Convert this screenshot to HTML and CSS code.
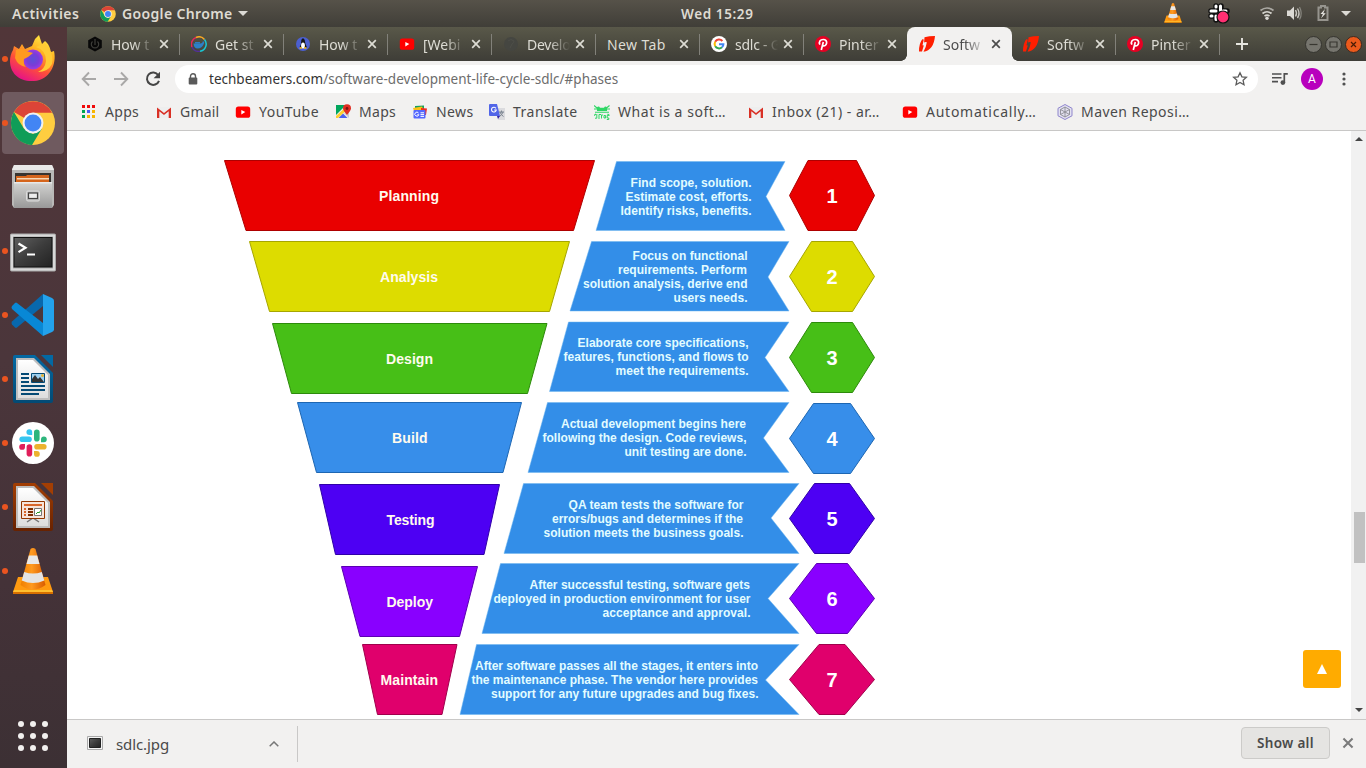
FILE: index.html
```html
<!DOCTYPE html>
<html lang="en">
<head>
<meta charset="utf-8">
<title>Software Development Life Cycle</title>
<link rel="stylesheet" href="styles.css">
</head>
<body>
<svg class="sprite" aria-hidden="true">
  <defs>
    <linearGradient id="cone" x1="0" x2="1" y1="0" y2="0"><stop offset="0" stop-color="#f08000"/><stop offset=".45" stop-color="#ff9a20"/><stop offset="1" stop-color="#d85a00"/></linearGradient>
    <linearGradient id="ff" x1=".8" x2=".3" y1="0" y2="1"><stop offset="0" stop-color="#fff04a"/><stop offset=".35" stop-color="#ffb020"/><stop offset=".65" stop-color="#ff5038"/><stop offset="1" stop-color="#e5108a"/></linearGradient>
    <radialGradient id="ffg"><stop offset="0" stop-color="#5b50d8"/><stop offset=".6" stop-color="#7b3cd8"/><stop offset="1" stop-color="#a03ce0"/></radialGradient>
    <linearGradient id="metal" x1="0" x2="0" y1="0" y2="1"><stop offset="0" stop-color="#d4d4d2"/><stop offset="1" stop-color="#999"/></linearGradient>
    <linearGradient id="dark" x1="0" x2="1" y1="0" y2="1"><stop offset="0" stop-color="#606060"/><stop offset=".5" stop-color="#3c3c3c"/><stop offset="1" stop-color="#222"/></linearGradient>
    <linearGradient id="paper" x1="0" x2="0" y1="0" y2="1"><stop offset="0" stop-color="#fff"/><stop offset="1" stop-color="#ddd"/></linearGradient>
    <linearGradient id="blue" x1="0" x2="0" y1="0" y2="1"><stop offset="0" stop-color="#0369a3"/><stop offset="1" stop-color="#034a74"/></linearGradient>
    <linearGradient id="brown" x1="0" x2="0" y1="0" y2="1"><stop offset="0" stop-color="#a33e03"/><stop offset="1" stop-color="#672201"/></linearGradient>
  </defs>
  <symbol id="chrome" viewBox="0 0 46 46">
    <circle cx="23" cy="23" r="22.5" fill="#ffcd40"/>
    <path d="M23 23L3.5 11.8A22.5 22.5 0 0 1 42.5 12.5H23z" fill="#db4437"/>
    <path d="M3.5 11.8L13.8 29l9.2 5.2 9-5.2-10 16.5A22.5 22.5 0 0 1 3.5 11.8z" fill="#0f9d58"/>
    <circle cx="23" cy="23" r="10.7" fill="#f1f1f1"/><circle cx="23" cy="23" r="8.6" fill="#4285f4"/>
  </symbol>
  <symbol id="vlc" viewBox="0 0 40 46">
    <path d="M5 29h30l5 15H0z" fill="#ff9a10"/><path d="M0 44h40v2H0z" fill="#d87000"/><path d="M1 42h38l1 2H0z" fill="#ffc030"/>
    <path d="M17.500 1q2.500-2 5 0l10 36q-12.500 9-25 0z" fill="url(#cone)"/>
    <path d="M15.800 7.500h8.400l2.300 8.500H13.500z" fill="#e8e8e8"/><path d="M11.200 24q8.800 3 17.600 0l2.500 8.500q-11.300 5-22.600 0z" fill="#e4e4e4"/>
  </symbol>
  <symbol id="yt" viewBox="0 0 16 16"><rect x=".8" y="2.500" width="14.400" height="11.300" rx="2.600" fill="#f00"/><path d="M6.300 5.900l4 2.200-4 2.300z" fill="#fff"/></symbol>
  <symbol id="gmail" viewBox="0 0 16 16"><path d="M2 3h12v11H2z" fill="#eee"/><path d="M1 14V3.500L8 9l7-5.500V14h-2.300V7.300L8 11 3.300 7.300V14z" fill="#d93025"/></symbol>
  <symbol id="pin" viewBox="0 0 16 16"><circle cx="8" cy="8" r="8" fill="#e60023"/><path d="M4.900 8.600C3.400 5.600 5.300 3.500 8.200 3.500c2.600 0 3.700 1.700 3.400 3.700-.3 2.200-2.500 3.600-3.900 2.100M8.300 6L6.300 14" fill="none" stroke="#fff" stroke-width="1.700"/></symbol>
  <symbol id="tb" viewBox="0 0 16 16"><path d="M5.500 1.200Q10 0 16 0q-.6 7-3.500 11Q9.500 15 4.500 15.700q2.600-4 3.300-9.400-1.300-.8-2.700.2z" fill="#ff1e00"/><path d="M3.300 3.200L4.800 3.600 3.500 9.300l1.300.3-1.800 6L0 15.500Q0 7 3.300 3.200z" fill="#ff1e00"/></symbol>
  <symbol id="x" viewBox="0 0 10 10"><path d="M1.200 1.200l7.600 7.600M8.800 1.200L1.200 8.800" stroke="currentColor" stroke-width="1.700"/></symbol>
  <symbol id="slackmarks" viewBox="0 0 28 28">
    <g stroke-width="5.600" stroke-linecap="round"><path d="M17.800 3.200v6.500" stroke="#2eb67d"/><path d="M18 17.800h6.800" stroke="#ecb22e"/><path d="M10.400 18v6.800" stroke="#e01e5a"/><path d="M3.200 10.300H10" stroke="#36c5f0"/></g>
    <path d="M13.200 6h-2.900a2.900 2.900 0 1 1 2.900-2.900z" fill="#36c5f0"/><path d="M22 13.200v-2.900a2.900 2.900 0 1 1 2.900 2.900z" fill="#2eb67d"/><path d="M15 22h2.900a2.900 2.900 0 1 1-2.900 2.900z" fill="#ecb22e"/><path d="M6 15v2.900A2.900 2.900 0 1 1 3.100 15z" fill="#e01e5a"/>
  </symbol>
</svg>

<header class="topbar">
  <span class="activities">Activities</span>
  <svg class="i16"><use href="#chrome"/></svg>
  <span class="appname">Google Chrome</span>
  <svg class="caret" viewBox="0 0 10 5"><path d="M0 0h10L5 5z" fill="#dcdad5"/></svg>
  <span class="clock">Wed 15:29</span>
  <svg class="tray" viewBox="1160 0 200 27">
    <use href="#vlc" x="1164" y="3" width="18" height="20"/>
    <g stroke-linecap="round"><path d="M1216 6v5M1211 11h5M1221 6v5M1211 16h3M1216 16v4M1221 11h6" stroke="#111" stroke-width="5.500"/><path d="M1216 6v1M1211 11h5M1220.500 6v4.500M1211 16h1M1216 16v3.500M1223 11h3" stroke="#fff" stroke-width="3"/></g>
    <circle cx="1223" cy="17" r="6" fill="#ff2f72" stroke="#111" stroke-width="1.200"/>
    <g fill="none" stroke="#d8d6d0" stroke-width="1.700"><path d="M1260.500 10.500q6.500-5 13 0" stroke="#aaa8a2"/><path d="M1262.500 13.500q4.500-3.500 9 0"/><path d="M1264.500 16.200q2.500-2 5 0"/></g><circle cx="1267" cy="18.300" r="1.700" fill="#dcdad5"/>
    <path d="M1287 10.500h3l4-4v13.500l-4-4h-3z" fill="#dcdad5"/><path d="M1295.500 10q2 3.200 0 6.500M1297.500 8.500q3 5 0 9.500" fill="none" stroke="#c8c6c0" stroke-width="1.400"/><path d="M1299.500 7q3.500 6.500 0 12.500" fill="none" stroke="#888780" stroke-width="1.200"/>
    <path d="M1318.500 7.500h2.500V6h4v1.500h2.500V20h-9z" fill="none" stroke="#96948e" stroke-width="2"/><path d="M1325 9l-4.500 5h2.400L1321 18.500l4.700-5.300h-2.400z" fill="#e8e6e2"/>
    <path d="M1341 11h10l-5 5z" fill="#dcdad5"/>
  </svg>
</header>

<div class="desktop">
<nav class="dock">
  <div class="launcher running"><svg class="big" viewBox="0 0 48 48"><path d="M23 11l3-7 4-4 3 9 3-3c4 3 5 7 6 11l3-1c3 13-4 29-20 30C10 47 1 38 1 26c0-4 1-8 3-11l1-4 5 3 3-5 3 5z" fill="url(#ff)"/><circle cx="24" cy="24.500" r="10" fill="url(#ffg)"/><path d="M7 15q5-3 10 1l7 2-5 4-4 2q-1 5 2 8-8-1-11-9z" fill="#ff9a20"/><path d="M27 12q10 3 10 14-1 8-8 11 10 0 14-8 2-9-4-16l-3-5z" fill="#ffcb35"/></svg></div>
  <div class="launcher running current"><svg class="big" viewBox="0 0 48 48"><use href="#chrome" x="1.500" y="1.500" width="45" height="45"/></svg></div>
  <div class="launcher"><svg class="big" viewBox="0 0 48 48"><path d="M5 2h38l2 4v36l-2 3H5l-2-3V6z" fill="#b9b9b7"/><path d="M5 2h38l2 5H3z" fill="#e9e9e8"/><path d="M6 10h36v11H6z" fill="#383430"/><path d="M7 13h10l1-1h22v9H7z" fill="#d5651c"/><path d="M8 15h32v1.500H8z" fill="#f7d8b6"/><path d="M5 19h38v26H5z" fill="url(#metal)"/><path d="M5 19h38v1.500H5z" fill="#e8e8e8"/><rect x="17.500" y="28" width="13" height="10" rx="1.500" fill="#bbb" stroke="#ddd"/><rect x="19.500" y="30" width="9" height="5.500" fill="#eee" stroke="#444" stroke-width="1.200"/></svg></div>
  <div class="launcher running"><svg class="big" viewBox="0 -1.500 48 48"><rect x="1.500" y="5.500" width="45" height="37" rx="1" fill="#d8d8d8" stroke="#aaa"/><rect x="4" y="8" width="40" height="32" fill="#aaa"/><rect x="5" y="9" width="38" height="29.500" fill="url(#dark)" stroke="#111"/><path d="M9.500 15l7 4.300-7 4.300M18 26h8" fill="none" stroke="#fff" stroke-width="2.200"/></svg></div>
  <div class="launcher running"><svg class="big" viewBox="0 0 48 48"><path d="M3 30.500L34 3v12L8 36.500q-1 .8-2 0L3 33.500q-1-1.500 0-3z" fill="#0868ad"/><path d="M3 15l3-3q1-1 2 0l26 20v13L3 18q-1-1.500 0-3z" fill="#0888d6"/><path d="M34 3l9 4q2 1 2 2.500v29q0 1.500-2 2.500l-9 4z" fill="#23a2ec"/></svg></div>
  <div class="launcher running"><svg class="big" viewBox="0 0 48 48"><path d="M4 2q0-2 2-2h20l18 18v28q0 2-2 2H6q-2 0-2-2z" fill="url(#blue)"/><path d="M7 3h18l16 16v26H7z" fill="#bdbdbd"/><path d="M9 5h15l15 15v23H9z" fill="url(#paper)"/><path d="M32 0h12v12z" fill="#0369a3"/><path d="M12 19h8M12 23h8M12 27h8M12 31h24M12 35h24M12 39h18" stroke="#044a75" stroke-width="2"/><path d="M22.500 18.500h13v9h-13z" fill="#9ed0ef" stroke="#044a75"/><path d="M23 27v-3l3-4 3 4 2-2 4 5z" fill="#333"/><circle cx="33.500" cy="20.500" r="1.500" fill="#e8b230"/></svg></div>
  <div class="launcher running"><svg class="big" viewBox="0 0 48 48"><circle cx="24" cy="24" r="21" fill="#fff"/><use href="#slackmarks" x="10" y="10" width="28" height="28"/></svg></div>
  <div class="launcher running"><svg class="big" viewBox="0 0 48 48"><path d="M4 2q0-2 2-2h20l18 18v28q0 2-2 2H6q-2 0-2-2z" fill="url(#brown)"/><path d="M7 3h18l16 16v26H7z" fill="#bdbdbd"/><path d="M9 5h15l15 15v23H9z" fill="url(#paper)"/><path d="M32 0h12v12z" fill="#a33e03"/><path d="M18 39l6-4 6 4" fill="none" stroke="#777" stroke-width="1.500"/><path d="M12.500 18.500h23v17h-23z" fill="#f7e4da" stroke="#933600"/><path d="M15 22h18" stroke="#d9662b" stroke-width="2"/><path d="M15 26h2M15 29h2M15 32h2" stroke="#d9662b" stroke-width="2"/><path d="M19 26h5M19 29h5M19 32h5" stroke="#812e00" stroke-width="2"/><path d="M25.500 25.500h7v7h-7z" fill="#fff" stroke="#777"/><path d="M27 31l2-2 1 1 2-3" fill="none" stroke="#2a9a2a"/></svg></div>
  <div class="launcher running"><svg class="big" viewBox="0 0 48 48"><use href="#vlc" x="4" y="1" width="40" height="46"/></svg></div>
  <svg class="appgrid" viewBox="0 0 30 30" fill="#f2f0ef"><circle cx="3" cy="3" r="3"/><circle cx="15" cy="3" r="3"/><circle cx="27" cy="3" r="3"/><circle cx="3" cy="15" r="3"/><circle cx="15" cy="15" r="3"/><circle cx="27" cy="15" r="3"/><circle cx="3" cy="27" r="3"/><circle cx="15" cy="27" r="3"/><circle cx="27" cy="27" r="3"/></svg>
</nav>

<main class="browser">
  <div class="tabs">
    <div class="tab"><svg class="i16" viewBox="0 0 16 16"><path d="M8 .5l6.800 3.800v7.500L8 15.500l-6.800-3.700V4.300z" fill="#080808"/><path d="M5.500 5.500a3.700 3.700 0 1 0 5 0M8 3v6" fill="none" stroke="#3e3e3a" stroke-width="1.200"/></svg><span class="title">How t</span><svg class="close"><use href="#x"/></svg></div>
    <div class="tab"><svg class="i16" viewBox="0 0 16 16" fill="none" stroke-width="1.500"><path d="M1 11A7.200 7.200 0 0 1 5 1.500" stroke="#e52858"/><path d="M5 1.500A7.200 7.200 0 0 1 13.500 3.500" stroke="#f7a823"/><path d="M13.500 3.500A7.200 7.200 0 0 1 9 15.200" stroke="#19c7d4"/><path d="M9 15.200A7.200 7.200 0 0 1 1 11" stroke="#53309a"/><path d="M2.500 7.500h7q2 0 2.500-2.500 2 1 1 2.500-2 5-6.500 5Q3 12.500 2.500 7.500z" fill="#2c80c8" stroke="none"/><path d="M4 6.800h5" stroke="#2c80c8"/></svg><span class="title">Get st</span><svg class="close"><use href="#x"/></svg></div>
    <div class="tab"><svg class="i16" viewBox="0 0 16 16"><circle cx="8" cy="8" r="7" fill="#4b5fd0"/><path d="M6.300 4q1.700-3.500 3.400 0l.8 4 1.500 3.500H4.500L6 8z" fill="#151515"/><ellipse cx="8" cy="9.500" rx="1.900" ry="3" fill="#fff"/><path d="M4.500 12h2.500M9 12h2.500" stroke="#f2b81e" stroke-width="1.600"/></svg><span class="title">How t</span><svg class="close"><use href="#x"/></svg></div>
    <div class="tab"><svg class="i16"><use href="#yt"/></svg><span class="title">[Webi</span><svg class="close"><use href="#x"/></svg></div>
    <div class="tab"><svg class="i16" viewBox="0 0 16 16"><circle cx="8" cy="8" r="7" fill="#454641"/><path d="M5 5q3-3 6 0 0 2-2 3l-2 4" fill="none" stroke="#4d4e48"/></svg><span class="title tight">Develo</span><svg class="close"><use href="#x"/></svg></div>
    <div class="tab"><span class="title full">New Tab</span><svg class="close"><use href="#x"/></svg></div>
    <div class="tab"><svg class="i16" viewBox="0 0 16 16"><circle cx="8" cy="8" r="8" fill="#fff"/><g fill="none" stroke-width="2"><path d="M4.200 5.800A4.500 4.500 0 0 1 11.400 5" stroke="#ea4335"/><path d="M4.200 10.200a4.500 4.500 0 0 1 0-4.400" stroke="#fbbc05"/><path d="M11 11.300a4.500 4.500 0 0 1-6.800-1.100" stroke="#34a853"/><path d="M8 8.200h4.400q0 2-1.400 3.100" stroke="#4285f4"/></g></svg><span class="title tight">sdlc - G</span><svg class="close"><use href="#x"/></svg></div>
    <div class="tab"><svg class="i16"><use href="#pin"/></svg><span class="title">Pinter</span><svg class="close"><use href="#x"/></svg></div>
    <div class="tab active"><svg class="i16"><use href="#tb"/></svg><span class="title">Softw</span><svg class="close"><use href="#x"/></svg></div>
    <div class="tab"><svg class="i16"><use href="#tb"/></svg><span class="title">Softw</span><svg class="close"><use href="#x"/></svg></div>
    <div class="tab"><svg class="i16"><use href="#pin"/></svg><span class="title">Pinter</span><svg class="close"><use href="#x"/></svg></div>
    <svg class="newtab" viewBox="0 0 12 12"><path d="M6 0v12M0 6h12" stroke="#e6e5df" stroke-width="1.900"/></svg>
    <div class="winbtns">
      <svg viewBox="0 0 17 17"><circle cx="8.500" cy="8.500" r="8" fill="#76756e" stroke="#35342f"/><path d="M4.500 8.500h8" stroke="#383731" stroke-width="1.200"/></svg>
      <svg viewBox="0 0 17 17"><circle cx="8.500" cy="8.500" r="8" fill="#76756e" stroke="#35342f"/><path d="M5 6h7v5H5z" fill="none" stroke="#383731" stroke-width="1.200"/></svg>
      <svg viewBox="0 0 17 17"><circle cx="8.500" cy="8.500" r="8" fill="#eb5a1c" stroke="#3a2a22"/><path d="M6 6l5 5M11 6l-5 5" stroke="#4a1c05" stroke-width="1.200"/></svg>
    </div>
  </div>

  <div class="toolbar">
    <svg class="nav" viewBox="0 0 16 16"><path d="M15 8H2M8 1.500L1.700 8 8 14.500" fill="none" stroke="#a9a8a7" stroke-width="1.900"/></svg>
    <svg class="nav" viewBox="0 0 16 16"><path d="M1 8h13M8 1.500L14.300 8 8 14.500" fill="none" stroke="#a9a8a7" stroke-width="1.900"/></svg>
    <svg class="nav" viewBox="0 0 16 16"><path d="M13.300 4.200A6.200 6.200 0 1 0 14 9.800" fill="none" stroke="#454545" stroke-width="2"/><path d="M15 .8v6.400H8.600z" fill="#454545"/></svg>
    <div class="omnibox">
      <svg class="lock" viewBox="0 0 10 12"><path d="M2.500 5V3.300a2.500 2.500 0 0 1 5 0V5" fill="none" stroke="#5a5a5a" stroke-width="1.400"/><rect x=".7" y="4.500" width="8.600" height="7" rx="1" fill="#5a5a5a"/></svg>
      <span class="url">techbeamers.com<span class="path">/software-development-life-cycle-sdlc/#phases</span></span>
      <svg class="star" viewBox="0 0 16 16"><path d="M8 1.700l1.900 4.100 4.500.5-3.300 3 .9 4.500L8 11.500l-4 2.300.9-4.500-3.300-3 4.500-.5z" fill="none" stroke="#5c5c5c" stroke-width="1.300"/></svg>
    </div>
    <svg class="queue" viewBox="0 0 16 14"><path d="M0 2h9.500M0 5.800h9.500M0 9.600h6" stroke="#505050" stroke-width="1.600"/><path d="M15.800 1.800h-3.500v8.500" fill="none" stroke="#505050" stroke-width="1.700"/><circle cx="10.900" cy="10.600" r="2.400" fill="#505050"/></svg>
    <span class="avatar">A</span>
    <svg class="menu" viewBox="0 0 4 14" fill="#505050"><circle cx="2" cy="2" r="1.600"/><circle cx="2" cy="7" r="1.600"/><circle cx="2" cy="12" r="1.600"/></svg>
  </div>

  <div class="bookmarks">
    <div class="bm apps"><svg class="i16" viewBox="0 0 16 16"><path d="M1 1h3v3H1zM6 1h3v3H6zM11 1h3v3h-3z" fill="#f00a0a"/><path d="M1 6h3v3H1zM1 11h3v3H1z" fill="#00a651"/><path d="M6 6h3v3H6z" fill="#4b5cf5"/><path d="M11 6h3v3h-3zM6 11h3v3H6zM11 11h3v3h-3z" fill="#f7b500"/></svg><span>Apps</span></div>
    <div class="bm gm"><svg class="i16"><use href="#gmail"/></svg><span>Gmail</span></div>
    <div class="bm you"><svg class="i16"><use href="#yt"/></svg><span>YouTube</span></div>
    <div class="bm maps"><svg class="i16" viewBox="0 0 16 16"><path d="M1 2h13v12H1z" fill="#eee"/><path d="M1 1h10L1 11z" fill="#00a65c"/><path d="M3.500 14L8 9.500l4.500 4.500z" fill="#4b62f0"/><path d="M1 12L12 2l2 2L3 14H1z" fill="#fdd131"/><path d="M9 9l5 5V7z" fill="#ccc"/><path d="M12 11Q8 6.500 8 4.300a4 4 0 0 1 8 0Q16 6.500 12 11z" fill="#e02d22"/><circle cx="12" cy="4.500" r="1.400" fill="#7a1410"/></svg><span>Maps</span></div>
    <div class="bm news"><svg class="i16" viewBox="0 0 16 16"><path d="M3 2l9-.5v5H3z" fill="#16a05c"/><path d="M1 4l9-1.500 2 4.500H2z" fill="#fbc116"/><path d="M9 4l6 .5-1 6.500H9z" fill="#f02c22"/><rect x="1.500" y="6" width="12" height="8.500" rx="1" fill="#5468ff"/><path d="M6.500 9a2 2 0 1 0 .3 1.700H5.300M8.500 8.800h3.500M8.500 10.600H12M8.500 12.400H12" fill="none" stroke="#fff"/></svg><span>News</span></div>
    <div class="bm trans"><svg class="i16" viewBox="0 0 16 16"><path d="M6 4h10v12H9z" fill="#dbdbde"/><path d="M10 8h5M12.500 6.500v2M11 8q1 3 3.500 4.500M14 8q-1 3-3.500 4.500" fill="none" stroke="#7b8490"/><path d="M1 0h7l3 12H1q-1 0-1-1V1q0-1 1-1z" fill="#5266e8"/><path d="M8 12h3l-2 3z" fill="#3326a8"/><path d="M7 4.400A2.400 2.400 0 1 0 7.300 6H5.200" fill="none" stroke="#fff" stroke-width="1.100"/></svg><span>Translate</span></div>
    <div class="bm frog"><svg class="i16" viewBox="0 0 16 16" fill="none" stroke="#2fd765"><path d="M0 1.500l3 2.500M15.500 1.500l-3 2.500M0 5h3M13 5h3M1 8.300h14M0 11.500l2-1.500M15.500 11.500l-2-1.500" stroke-width="1.100"/><path d="M3 3.200q2-1.500 3 .5h4q1-2 3-.5v3.800H3z" fill="#2fd765" stroke="none"/><path d="M2.800 10v4.200H1M5 15v-4.500h2.200M9 11H7.500v3.500M10 11.500h1.600v2.500H10zM14.800 11.500h-1.600V14h1.600v1.500h-2" stroke-width="1"/></svg><span>What is a soft…</span></div>
    <div class="bm inbox"><svg class="i16"><use href="#gmail"/></svg><span>Inbox (21) - ar…</span></div>
    <div class="bm auto"><svg class="i16"><use href="#yt"/></svg><span>Automatically…</span></div>
    <div class="bm maven"><svg class="i16" viewBox="0 0 16 16"><path d="M8 .5l7 3.800v7.500l-7 3.700-7-3.700V4.300z" fill="#e3e1f0" stroke="#8f86cc"/><path d="M8 3l4.500 2.500v5L8 13l-4.500-2.500v-5zM8 3v10M3.500 5.500l9 5M12.500 5.500l-9 5" fill="none" stroke="#8b8b93" stroke-width=".9"/></svg><span>Maven Reposi…</span></div>
  </div>

  <section class="page">
    <svg class="funnel" viewBox="217 131 670 588">
      <g class="stages">
        <path d="M224.500 160.500H594.500L573.500 230.500H246z" fill="#e90000" stroke="#ae0000"/>
        <path d="M249.500 241.500H569.500L549.500 311.500H269.500z" fill="#dddc00" stroke="#a6a600"/>
        <path d="M272.500 323.500H547L527.500 393.500H291.500z" fill="#47bf17" stroke="#2d8a0b"/>
        <path d="M297.500 402.500H521.500L503 472.500H316.500z" fill="#378eea" stroke="#1d66b2"/>
        <path d="M319.500 484.500H499.500L484 554.500H335.500z" fill="#4d00f3" stroke="#3000a8"/>
        <path d="M341.500 566.500H477.500L459.500 636.500H360z" fill="#8900ff" stroke="#5b00b2"/>
        <path d="M362.500 644.500H457L442 714.500H377.500z" fill="#e0006c" stroke="#a0004c"/>
      </g>
      <g class="ribbons">
        <path d="M616.500 161.500H785L766 196.500L785 230.500H596z"/>
        <path d="M591.500 241.500H789L768 277L789 311H570z"/>
        <path d="M568.500 322H789L765 357.500L789 391.500H549.500z"/>
        <path d="M547.500 402.500H789L763.500 438L789 472.500H528z"/>
        <path d="M523.500 483.500H799L771 518L799 553.500H504z"/>
        <path d="M500.500 563.500H799L768 598.500L799 633.500H482z"/>
        <path d="M476.500 644.500H799L765.500 680L799 714.500H460z"/>
      </g>
      <g class="hexes">
        <path d="M789.500 195.500L808 160.500H856.500L874.500 195.500L856.500 230.500H808z" fill="#e90000" stroke="#ae0000"/>
        <path d="M789.500 276.500L811.500 241.500H852.500L874.500 276.500L852.500 311.500H811.500z" fill="#dddc00" stroke="#a6a600"/>
        <path d="M789.500 357.500L811.500 322.500H852.500L874.500 357.500L852.500 392.500H811.500z" fill="#47bf17" stroke="#2d8a0b"/>
        <path d="M789.500 438.500L813.500 403.500H850.500L874.500 438.500L850.500 473.500H813.500z" fill="#378eea" stroke="#1d66b2"/>
        <path d="M789.500 518.500L814.500 483.500H849.500L874.500 518.500L849.500 553.500H814.500z" fill="#4d00f3" stroke="#3000a8"/>
        <path d="M789.500 598.500L816.500 563.500H847.500L874.500 598.500L847.500 633.500H816.500z" fill="#8900ff" stroke="#5b00b2"/>
        <path d="M789.500 679.500L819 644.500H845L874.500 679.500L845 714.500H819z" fill="#e0006c" stroke="#a0004c"/>
      </g>
      <g class="names">
        <text x="379" y="201" textLength="60">Planning</text><text x="380" y="282" textLength="58">Analysis</text><text x="386" y="364" textLength="47">Design</text><text x="392" y="443" textLength="35.500">Build</text><text x="386.500" y="525" textLength="48">Testing</text><text x="386.500" y="607" textLength="46.500">Deploy</text><text x="380.500" y="685" textLength="57.500">Maintain</text>
      </g>
      <g class="notes">
        <text x="630.500" y="187" textLength="121">Find scope, solution.</text><text x="625.500" y="201" textLength="126">Estimate cost, efforts.</text><text x="620.500" y="215" textLength="131">Identify risks, benefits.</text>
        <text x="632.500" y="260" textLength="115">Focus on functional</text><text x="618" y="274" textLength="129">requirements. Perform</text><text x="583" y="288" textLength="164.500">solution analysis, derive end</text><text x="673.500" y="302" textLength="74">users needs.</text>
        <text x="577.500" y="347" textLength="171">Elaborate core specifications,</text><text x="563.500" y="361" textLength="185">features, functions, and flows to</text><text x="615.500" y="375" textLength="133">meet the requirements.</text>
        <text x="561" y="428" textLength="185">Actual development begins here</text><text x="542.500" y="442" textLength="204">following the design. Code reviews,</text><text x="624.500" y="456" textLength="122">unit testing are done.</text>
        <text x="568.500" y="509" textLength="175">QA team tests the software for</text><text x="552" y="523" textLength="191">errors/bugs and determines if the</text><text x="543.500" y="537" textLength="200">solution meets the business goals.</text>
        <text x="529.500" y="589" textLength="220.500">After successful testing, software gets</text><text x="493.500" y="603" textLength="257">deployed in production environment for user</text><text x="602.500" y="617" textLength="148">acceptance and approval.</text>
        <text x="475" y="670" textLength="283">After software passes all the stages, it enters into</text><text x="471.500" y="684" textLength="286.500">the maintenance phase. The vendor here provides</text><text x="491" y="698" textLength="267.500">support for any future upgrades and bug fixes.</text>
      </g>
      <g class="digits"><text x="832" y="203">1</text><text x="832" y="284">2</text><text x="832" y="365">3</text><text x="832" y="446">4</text><text x="832" y="526">5</text><text x="832" y="606">6</text><text x="832" y="687">7</text></g>
    </svg>
    <div class="totop"><svg viewBox="0 0 10 10"><path d="M5 0l5 10H0z" fill="#fff"/></svg></div>
    <div class="scrollbar"><svg viewBox="0 0 8 4"><path d="M4 0l4 4H0z"/></svg><div class="thumb"></div><svg viewBox="0 0 8 4"><path d="M0 0h8L4 4z"/></svg></div>
  </section>

  <footer class="downloads">
    <div class="file"><svg class="thumbicon" viewBox="0 0 16 14"><path d="M.5.5h15v13H.5z" fill="#f4f4f4" stroke="#aaa"/><path d="M2.500 2.500h11v9h-11z" fill="url(#dark)" stroke="#222"/></svg><span class="filename">sdlc.jpg</span><svg class="chev" viewBox="0 0 10 6"><path d="M.7 5.300L5 1l4.300 4.300" fill="none" stroke="#777" stroke-width="1.500"/></svg></div>
    <div class="showall">Show all</div>
    <svg class="dismiss"><use href="#x"/></svg>
  </footer>
</main>
</div>
</body>
</html>
```
FILE: styles.css
```css
* { box-sizing: border-box; }
body { margin: 0; width: 1366px; height: 768px; overflow: hidden; display: flex; flex-direction: column; font-family: "Noto Sans", "Open Sans", sans-serif; font-size: 14px; color: #4a4a4a; background: #fff; }
svg { display: block; flex: none; }
.sprite { position: absolute; width: 0; height: 0; }
.i16 { width: 16px; height: 16px; }

/* system bar */
.topbar { height: 27px; flex: none; display: flex; align-items: center; background: linear-gradient(#565249, #403e38); color: #dfdbd2; font-weight: 600; white-space: nowrap; }
.activities { width: 88px; padding-left: 12px; font-size: 14px; letter-spacing: .5px; }
.topbar > .i16 { margin-left: 12px; }
.appname { width: 111px; margin-left: 6px; margin-right: 5px; letter-spacing: .35px; }
.caret { width: 10px; height: 5px; }
.clock { width: 76px; margin-left: 433px; font-size: 13.5px; letter-spacing: .6px; }
.tray { width: 200px; height: 27px; margin-left: 403px; }

.desktop { flex: 1; display: flex; min-height: 0; }

/* dock */
.dock { width: 67px; display: flex; flex-direction: column; background: linear-gradient(#513639 0%, #4b363b 45%, #443238 75%, #3c3034 100%); }
.launcher { height: 62px; margin: 1px 3px 1px 2px; flex: none; display: flex; align-items: center; border-radius: 4px; padding-left: 7px; }
.launcher.running { padding-left: 0; }
.launcher.running::before { content: ""; width: 6px; height: 6px; border-radius: 3px; background: #ea5420; margin-right: 1px; }
.launcher.current { background: #6f5a5f; }
.big { width: 48px; height: 48px; }
.appgrid { width: 30px; height: 30px; margin: auto 0 17px 18px; }

/* browser */
.browser { flex: 1; min-width: 0; display: flex; flex-direction: column; }
.tabs { height: 34px; flex: none; display: flex; padding-left: 8px; align-items: center; background: linear-gradient(#595849, #3e3d37); }
.tab { width: 104px; height: 34px; display: flex; align-items: center; padding-left: 12px; color: #dddcd4; position: relative; }
.tab::after { content: ""; position: absolute; right: -1px; top: 7px; width: 1px; height: 21px; background: #82817a; }
.tab:nth-child(8)::after, .tab.active::after { display: none; }
.title { width: 44px; margin-left: 8px; white-space: nowrap; font-size: 14px; -webkit-mask-image: linear-gradient(90deg, #000 50%, transparent 98%); mask-image: linear-gradient(90deg, #000 50%, transparent 98%); }
.title.tight { letter-spacing: -.25px; }
.title.full { width: 68px; margin-left: 0; letter-spacing: .4px; -webkit-mask-image: none; mask-image: none; }
.close { width: 10px; height: 10px; margin-left: 4px; }
.tab.active { width: 105px; margin-right: -1px; background: #f2f1f0; color: #4c4c4c; border-radius: 8px 8px 0 0; }
.tab.active::before { content: ""; position: absolute; left: -6px; right: -6px; bottom: 0; height: 6px; background: radial-gradient(circle at 0 0, transparent 5.5px, #f2f1f0 6px) left / 6px 6px no-repeat, radial-gradient(circle at 100% 0, transparent 5.5px, #f2f1f0 6px) right / 6px 6px no-repeat; }
.newtab { width: 12px; height: 12px; margin-left: 17px; }
.winbtns { display: flex; gap: 3px; margin-left: auto; margin-right: 4px; }
.winbtns svg { width: 17px; height: 17px; }

.toolbar { height: 36px; flex: none; display: flex; align-items: center; background: #f2f1f0; padding-left: 14px; }
.nav { width: 16px; height: 16px; margin-right: 16px; }
.omnibox { width: 1083px; height: 28px; margin-left: -2px; padding: 0 10px 0 13px; background: #fff; border-radius: 14px; display: flex; align-items: center; }
.lock { width: 10px; height: 12px; }
.url { margin-left: 11px; font-size: 13.5px; color: #333; white-space: nowrap; letter-spacing: .01px; }
.path { color: #6c6c6c; }
.star { width: 16px; height: 16px; margin-left: auto; }
.queue { width: 16px; height: 14px; margin-left: 14px; }
.avatar { width: 22px; height: 22px; margin-left: 13px; border-radius: 11px; background: #b800bd; color: #fff; font: 12px/22px Roboto, sans-serif; text-align: center; }
.menu { width: 4px; height: 14px; margin-left: 19px; }

.bookmarks { height: 34px; flex: none; display: flex; padding: 0 0 4px 14px; align-items: center; background: #f2f1f0; border-bottom: 1px solid #c8c7c6; }
.bm { display: flex; gap: 8px; align-items: center; white-space: nowrap; flex: none; letter-spacing: .5px; }
.apps { width: 75px; letter-spacing: .3px; }
.gm { width: 79px; letter-spacing: .2px; }
.you { width: 100px; }
.maps { width: 77px; letter-spacing: .3px; }
.news { width: 77px; letter-spacing: .4px; }
.trans { width: 105px; }
.frog { width: 154px; letter-spacing: .55px; }
.inbox { width: 154px; }
.auto { width: 154px; letter-spacing: .75px; }
.maven { letter-spacing: .45px; margin-left: 1px; }

.page { flex: 1; min-height: 0; position: relative; display: flex; justify-content: space-between; background: #fff; }
.funnel { width: 670px; height: 588px; margin-left: 150px; font-family: "Liberation Sans", Arial, sans-serif; font-weight: bold; }
.ribbons { fill: #338ee8; stroke: #6fb6ef; stroke-width: .5; }
.names { font-size: 14px; fill: #fffbee; }
.notes { font-size: 12px; fill: #e2fcff; }
.digits { font-size: 20px; fill: #fff; text-anchor: middle; }
.totop { position: absolute; right: 25px; bottom: 31px; width: 38px; height: 38px; border-radius: 3px; background: #ffab00; display: flex; align-items: center; justify-content: center; }
.totop svg { width: 10px; height: 10px; }
.scrollbar { width: 15px; background: #f1f1f1; display: flex; flex-direction: column; align-items: center; padding: 6px 0 7px; }
.scrollbar svg { width: 8px; height: 4px; fill: #454545; }
.thumb { width: 11px; height: 51px; margin: 371px 0 auto 1px; background: #c1c1c1; }

.downloads { height: 49px; flex: none; display: flex; align-items: center; background: #f2f1f0; border-top: 1px solid #c9c8c7; }
.file { width: 231px; height: 36px; display: flex; align-items: center; padding-left: 20px; border-right: 1px solid #c9c8c7; }
.thumbicon { width: 16px; height: 14px; margin-top: -3px; }
.filename { width: 54px; margin-left: 13px; font-size: 15px; letter-spacing: -.1px; }
.chev { width: 10px; height: 6px; margin-left: 99px; }
.showall { width: 89px; height: 32px; margin-left: auto; border: 1px solid #cccbc9; border-radius: 4px; background: #e5e4e2; font-weight: 600; font-size: 13.5px; letter-spacing: .3px; line-height: 31px; text-align: center; margin-top: -2px; }
.dismiss { width: 12px; height: 12px; margin: -2px 12px 0; color: #7b7b7b; }
```
